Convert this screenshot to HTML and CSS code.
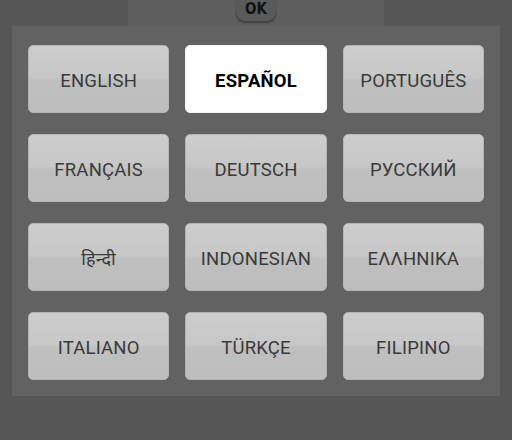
FILE: index.html
```html
<!DOCTYPE html>
<html lang="en">
<head>
    <meta charset="UTF-8">
    <title>Language</title>
    <link rel="stylesheet" href="styles.css">
</head>
<body>
    <div class="top-bar">
        <button class="ok-btn">OK</button>
    </div>

    <div class="panel">
        <div class="lang-grid">
            <button class="lang">ENGLISH</button>
            <button class="lang selected">ESPAÑOL</button>
            <button class="lang">PORTUGUÊS</button>
            <button class="lang">FRANÇAIS</button>
            <button class="lang">DEUTSCH</button>
            <button class="lang">РУССКИЙ</button>
            <button class="lang hindi">हिन्दी</button>
            <button class="lang">INDONESIAN</button>
            <button class="lang">ΕΛΛΗΝΙΚΑ</button>
            <button class="lang">ITALIANO</button>
            <button class="lang">TÜRKÇE</button>
            <button class="lang">FILIPINO</button>
        </div>
    </div>
</body>
</html>
```

FILE: styles.css
```css
:root {
    --bg-color: #565656;
    --panel-bg: #626262;
    --btn-top: #cdcdcd;
    --btn-bottom: #bdbdbd;
    --text-color: #3a3a3a;
}

body {
    background-color: var(--bg-color);
    margin: 0;
    width: 512px;
    height: 440px;
    overflow: hidden;
    font-family: Roboto, "Liberation Sans", sans-serif;
}

.top-bar {
    width: 256px;
    height: 26px;
    margin: 0 auto;
    background-color: #5e5e5e;
    display: flex;
    justify-content: center;
    align-items: flex-start;
}

.ok-btn {
    width: 40px;
    height: 21px;
    padding: 2px 0 4px;
    border: none;
    border-radius: 0 0 9px 9px;
    background-color: #5a5a5a;
    box-shadow: 0 2px 2px rgba(0, 0, 0, 0.35);
    color: #111;
    font-family: "DejaVu Sans Condensed", "DejaVu Sans", sans-serif;
    font-weight: bold;
    font-size: 15px;
    line-height: 15px;
}

.panel {
    margin: 0 12px;
    background-color: var(--panel-bg);
    padding: 19px 16px 16px;
}

.lang-grid {
    display: grid;
    grid-template-columns: repeat(3, 1fr);
    column-gap: 16px;
    row-gap: 21px;
}

.lang {
    height: 68px;
    padding: 3px 0 0;
    border: 1px solid #b4b4b4;
    border-radius: 5px;
    background: linear-gradient(to bottom, var(--btn-top) 0%, #c7c7c7 48%, #bfbfbf 52%, var(--btn-bottom) 100%);
    color: var(--text-color);
    font-family: Roboto, "Liberation Sans", sans-serif;
    font-size: 18.5px;
    letter-spacing: 0.2px;
}

.lang.selected {
    background: #ffffff;
    border-color: #f4f4f4;
    color: #000;
    font-weight: bold;
}

.lang.hindi {
    padding-top: 6px;
    font-family: "Noto Sans Devanagari", "Lohit Devanagari", "Noto Sans", sans-serif;
    font-size: 18px;
}
```
